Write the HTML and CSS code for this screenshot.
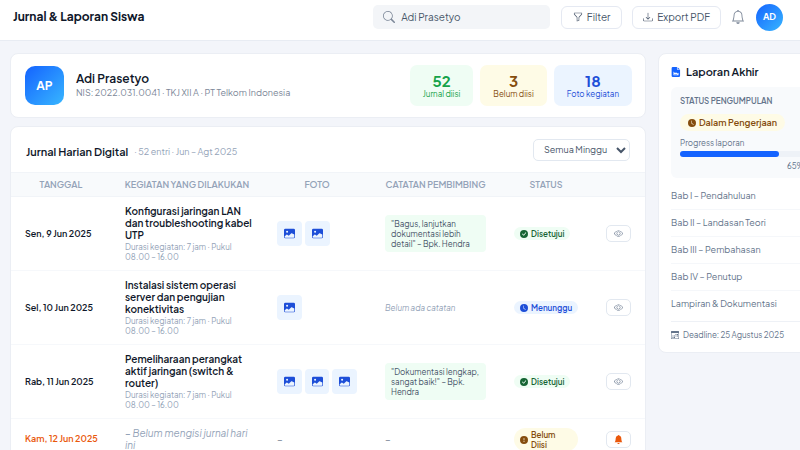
FILE: index.html
```html
<!DOCTYPE html>
<html lang="id">

<head>
  <meta charset="UTF-8" />
  <meta name="viewport" content="width=device-width, initial-scale=1.0" />
  <title>Jurnal & Laporan Siswa</title>
  <link rel="stylesheet" href="styles.css">
</head>

<body>
  <!-- Icon set -->
  <svg class="sprite" aria-hidden="true">
    <symbol id="search" viewBox="0 0 16 16"><path d="M11.742 10.344a6.5 6.5 0 1 0-1.397 1.398h-.001q.044.06.098.115l3.85 3.85a1 1 0 0 0 1.415-1.414l-3.85-3.85a1 1 0 0 0-.115-.1zM12 6.5a5.5 5.5 0 1 1-11 0 5.5 5.5 0 0 1 11 0"/></symbol>
    <symbol id="funnel" viewBox="0 0 16 16"><path d="M1.5 1.5A.5.5 0 0 1 2 1h12a.5.5 0 0 1 .5.5v2a.5.5 0 0 1-.128.334L10 8.692V13.5a.5.5 0 0 1-.342.474l-3 1A.5.5 0 0 1 6 14.5V8.692L1.628 3.834A.5.5 0 0 1 1.5 3.5zm1 .5v1.308l4.372 4.858A.5.5 0 0 1 7 8.5v5.306l2-.666V8.5a.5.5 0 0 1 .128-.334L13.5 3.308V2z"/></symbol>
    <symbol id="download" viewBox="0 0 16 16"><path d="M.5 9.9a.5.5 0 0 1 .5.5v2.5a1 1 0 0 0 1 1h12a1 1 0 0 0 1-1v-2.5a.5.5 0 0 1 1 0v2.5a2 2 0 0 1-2 2H2a2 2 0 0 1-2-2v-2.5a.5.5 0 0 1 .5-.5"/><path d="M7.646 11.854a.5.5 0 0 0 .708 0l3-3a.5.5 0 0 0-.708-.708L8.5 10.293V1.5a.5.5 0 0 0-1 0v8.793L5.354 8.146a.5.5 0 1 0-.708.708z"/></symbol>
    <symbol id="bell" viewBox="0 0 16 16"><path d="M8 16a2 2 0 0 0 2-2H6a2 2 0 0 0 2 2M8 1.918l-.797.161A4 4 0 0 0 4 6c0 .628-.134 2.197-.459 3.742-.16.767-.376 1.566-.663 2.258h10.244c-.287-.692-.502-1.49-.663-2.258C12.134 8.197 12 6.628 12 6a4 4 0 0 0-3.203-3.92zM14.22 12c.223.447.481.801.78 1H1c.299-.199.557-.553.78-1C2.68 10.2 3 6.88 3 6c0-2.42 1.72-4.44 4.005-4.901a1 1 0 1 1 1.99 0A5 5 0 0 1 13 6c0 .88.32 4.2 1.22 6"/></symbol>
    <symbol id="bell-fill" viewBox="0 0 16 16"><path d="M8 16a2 2 0 0 0 2-2H6a2 2 0 0 0 2 2m.995-14.901a1 1 0 1 0-1.99 0A5 5 0 0 0 3 6c0 1.098-.5 6-2 7h14c-1.5-1-2-5.902-2-7 0-2.42-1.72-4.44-4.005-4.901"/></symbol>
    <symbol id="check" viewBox="0 0 16 16"><path d="M16 8A8 8 0 1 1 0 8a8 8 0 0 1 16 0m-3.97-3.03a.75.75 0 0 0-1.08.022L7.477 9.417 5.384 7.323a.75.75 0 0 0-1.06 1.06L6.97 11.03a.75.75 0 0 0 1.079-.02l3.992-4.99a.75.75 0 0 0-.01-1.05z"/></symbol>
    <symbol id="clock" viewBox="0 0 16 16"><path d="M16 8A8 8 0 1 1 0 8a8 8 0 0 1 16 0M8 3.5a.5.5 0 0 0-1 0V9a.5.5 0 0 0 .252.434l3.5 2a.5.5 0 0 0 .496-.868L8 8.71z"/></symbol>
    <symbol id="exclamation" viewBox="0 0 16 16"><path d="M16 8A8 8 0 1 1 0 8a8 8 0 0 1 16 0M8 4a.905.905 0 0 0-.9.995l.35 3.507a.552.552 0 0 0 1.1 0l.35-3.507A.905.905 0 0 0 8 4m.002 6a1 1 0 1 0 0 2 1 1 0 0 0 0-2"/></symbol>
    <symbol id="eye" viewBox="0 0 16 16"><path d="M16 8s-3-5.500-8-5.500S0 8 0 8s3 5.500 8 5.500S16 8 16 8M1.173 8a13 13 0 0 1 1.660-2.043C4.120 4.668 5.880 3.500 8 3.500s3.879 1.168 5.168 2.457A13 13 0 0 1 14.828 8q-.086.13-.195.288c-.335.48-.83 1.120-1.465 1.755C11.879 11.332 10.119 12.500 8 12.500s-3.879-1.168-5.168-2.457A13 13 0 0 1 1.172 8z"/><path d="M8 5.500a2.500 2.500 0 1 0 0 5 2.500 2.500 0 0 0 0-5M4.500 8a3.500 3.500 0 1 1 7 0 3.500 3.500 0 0 1-7 0"/></symbol>
    <symbol id="image" viewBox="0 0 16 16"><path d="M.002 3a2 2 0 0 1 2-2h12a2 2 0 0 1 2 2v10a2 2 0 0 1-2 2h-12a2 2 0 0 1-2-2zm1 9v1a1 1 0 0 0 1 1h12a1 1 0 0 0 1-1V9.500l-3.777-1.947a.5.5 0 0 0-.577.093l-3.710 3.710-2.660-1.772a.5.5 0 0 0-.63.062zm5-6.500a1.500 1.500 0 1 0-3 0 1.500 1.500 0 0 0 3 0"/></symbol>
    <symbol id="file" viewBox="0 0 16 16"><path fill-rule="evenodd" d="M3 0h6.500v3A1.500 1.500 0 0 0 11 4.500h3.500V14a2 2 0 0 1-2 2H3a2 2 0 0 1-2-2V2a2 2 0 0 1 2-2m7.500.5 3.500 3H11a.5.5 0 0 1-.5-.5zM4 7v6h8V9l-2 1.500L8 8.500 6.500 10zm1 4h5v1H5z"/></symbol>
    <symbol id="calendar" viewBox="0 0 16 16"><path fill-rule="evenodd" d="M1 0h14a1 1 0 0 1 1 1v14a1 1 0 0 1-1 1H1a1 1 0 0 1-1-1V1a1 1 0 0 1 1-1m0 4v11h14V4zM9 6h2v2H9zm3 0h2v2h-2zM6 9h2v2H6zm3 0h2v2H9zm3 0h2v2h-2zM3 9h2v2H3zm0 3h2v2H3zm3 0h2v2H6z"/></symbol>
  </svg>

  <header class="topbar">
    <h1>Jurnal & Laporan Siswa</h1>
    <div class="search">
      <svg class="icon"><use href="#search"/></svg>
      <input type="text" value="Adi Prasetyo" aria-label="Cari siswa" />
    </div>
    <button class="btn"><svg class="icon"><use href="#funnel"/></svg>Filter</button>
    <button class="btn"><svg class="icon"><use href="#download"/></svg>Export PDF</button>
    <button class="bell" aria-label="Notifikasi"><svg class="icon"><use href="#bell"/></svg></button>
    <div class="avatar">AD</div>
  </header>

  <div class="layout">
    <main>
      <section class="card profile">
        <div class="initials">AP</div>
        <div class="info">
          <h2>Adi Prasetyo</h2>
          <p>NIS: 2022.031.0041 · TKJ XII A · PT Telkom Indonesia</p>
        </div>
        <div class="stats">
          <div class="stat green"><b>52</b><span>Jurnal diisi</span></div>
          <div class="stat yellow"><b>3</b><span>Belum diisi</span></div>
          <div class="stat blue"><b>18</b><span>Foto kegiatan</span></div>
        </div>
      </section>

      <section class="card journal">
        <div class="journal-head">
          <h3>Jurnal Harian Digital</h3>
          <span>· 52 entri · Jun – Agt 2025</span>
          <select aria-label="Pilih minggu">
            <option>Semua Minggu</option>
          </select>
        </div>

        <table>
          <colgroup>
            <col class="c-date"><col class="c-work"><col class="c-photo"><col class="c-note"><col class="c-status"><col class="c-action">
          </colgroup>
          <thead>
            <tr>
              <th>TANGGAL</th>
              <th>KEGIATAN YANG DILAKUKAN</th>
              <th>FOTO</th>
              <th>CATATAN PEMBIMBING</th>
              <th>STATUS</th>
              <th></th>
            </tr>
          </thead>
          <tbody>
            <tr>
              <td class="date">Sen, 9 Jun 2025</td>
              <td>
                <div class="work">Konfigurasi jaringan LAN<br>dan troubleshooting kabel<br>UTP</div>
                <div class="time">Durasi kegiatan: 7 jam · Pukul<br>08.00 – 16.00</div>
              </td>
              <td>
                <div class="photos">
                  <span class="photo"><svg class="icon"><use href="#image"/></svg></span>
                  <span class="photo"><svg class="icon"><use href="#image"/></svg></span>
                </div>
              </td>
              <td><div class="note">"Bagus, lanjutkan<br>dokumentasi lebih<br>detail" – Bpk. Hendra</div></td>
              <td><span class="badge green"><svg class="icon"><use href="#check"/></svg>Disetujui</span></td>
              <td><button class="action" aria-label="Lihat"><svg class="icon"><use href="#eye"/></svg></button></td>
            </tr>
            <tr>
              <td class="date">Sel, 10 Jun 2025</td>
              <td>
                <div class="work">Instalasi sistem operasi<br>server dan pengujian<br>konektivitas</div>
                <div class="time">Durasi kegiatan: 7 jam · Pukul<br>08.00 – 16.00</div>
              </td>
              <td>
                <div class="photos">
                  <span class="photo"><svg class="icon"><use href="#image"/></svg></span>
                </div>
              </td>
              <td class="none">Belum ada catatan</td>
              <td><span class="badge blue"><svg class="icon"><use href="#clock"/></svg>Menunggu</span></td>
              <td><button class="action" aria-label="Lihat"><svg class="icon"><use href="#eye"/></svg></button></td>
            </tr>
            <tr>
              <td class="date">Rab, 11 Jun 2025</td>
              <td>
                <div class="work">Pemeliharaan perangkat<br>aktif jaringan (switch &<br>router)</div>
                <div class="time">Durasi kegiatan: 7 jam · Pukul<br>08.00 – 16.00</div>
              </td>
              <td>
                <div class="photos">
                  <span class="photo"><svg class="icon"><use href="#image"/></svg></span>
                  <span class="photo"><svg class="icon"><use href="#image"/></svg></span>
                  <span class="photo"><svg class="icon"><use href="#image"/></svg></span>
                </div>
              </td>
              <td><div class="note">"Dokumentasi lengkap,<br>sangat baik!" – Bpk.<br>Hendra</div></td>
              <td><span class="badge green"><svg class="icon"><use href="#check"/></svg>Disetujui</span></td>
              <td><button class="action" aria-label="Lihat"><svg class="icon"><use href="#eye"/></svg></button></td>
            </tr>
            <tr>
              <td class="date late">Kam, 12 Jun 2025</td>
              <td><div class="empty">– Belum mengisi jurnal hari<br>ini</div></td>
              <td class="dash">–</td>
              <td class="dash">–</td>
              <td><span class="badge yellow wide"><svg class="icon"><use href="#exclamation"/></svg><span>Belum<br>Diisi</span></span></td>
              <td><button class="action remind" aria-label="Ingatkan"><svg class="icon"><use href="#bell-fill"/></svg></button></td>
            </tr>
          </tbody>
        </table>
      </section>
    </main>

    <aside class="card report">
      <h3><svg class="icon"><use href="#file"/></svg>Laporan Akhir</h3>
      <div class="progress-box">
        <h4>STATUS PENGUMPULAN</h4>
        <span class="pill"><svg class="icon"><use href="#clock"/></svg>Dalam Pengerjaan</span>
        <p>Progress laporan</p>
        <div class="track"><div class="fill" style="width: 65%"></div></div>
        <p class="percent">65% selesai</p>
      </div>
      <ul>
        <li>Bab I – Pendahuluan</li>
        <li>Bab II – Landasan Teori</li>
        <li>Bab III – Pembahasan</li>
        <li>Bab IV – Penutup</li>
        <li>Lampiran & Dokumentasi</li>
      </ul>
      <div class="deadline"><svg class="icon"><use href="#calendar"/></svg>Deadline: 25 Agustus 2025</div>
    </aside>
  </div>
</body>

</html>
```
FILE: styles.css
```css
* {
  box-sizing: border-box;
  margin: 0;
  padding: 0;
}

html {
  overflow-x: hidden;
}

body {
  background-color: #f3f5fa;
  color: #0f172a;
  font-family: "Plus Jakarta Sans", "Inter", sans-serif;
  font-size: 10px;
  line-height: 12px;
}

button,
input,
select {
  font-family: inherit;
}

.sprite {
  display: none;
}

.icon {
  width: 10px;
  height: 10px;
  fill: currentColor;
  flex-shrink: 0;
}

/* top bar */
.topbar {
  display: flex;
  align-items: center;
  height: 41px;
  padding: 0 17px 6px 13px;
  background-color: white;
  border-bottom: 1px solid #e8ecf3;
}

h1 {
  font-size: 12px;
  font-weight: 700;
  margin-right: auto;
}

.search {
  display: flex;
  align-items: center;
  gap: 6px;
  width: 177px;
  height: 24px;
  padding: 0 10px;
  margin-right: 11px;
  border-radius: 5px;
  background-color: #f3f5f8;
  color: #7c8798;
}

.search .icon {
  width: 12px;
  height: 12px;
}

.search input {
  width: 100%;
  border: none;
  outline: none;
  background: none;
  color: #475569;
  font-size: 10px;
}

.btn {
  display: flex;
  align-items: center;
  justify-content: center;
  gap: 4px;
  min-width: 61px;
  height: 23px;
  padding: 0 10px;
  margin-right: 10px;
  border: 1px solid #e5e9f2;
  border-radius: 6px;
  background-color: white;
  color: #475569;
  font-size: 10px;
}

.bell {
  display: flex;
  margin-right: 11px;
  border: none;
  background: none;
  color: #7c8798;
}

.bell .icon {
  width: 14px;
  height: 14px;
}

.avatar,
.initials {
  display: flex;
  align-items: center;
  justify-content: center;
  background: linear-gradient(135deg, #1463ff, #38b6ff);
  color: white;
  font-weight: 700;
}

.avatar {
  width: 27px;
  height: 27px;
  border-radius: 50%;
  font-size: 9px;
}

/* page columns */
.layout {
  display: grid;
  grid-template-columns: minmax(636px, 1fr) 195px;
  align-items: start;
  gap: 12px;
  padding: 12px 10px;
}

main {
  display: grid;
  gap: 8px;
}

.card {
  background-color: white;
  border: 1px solid #ebeef4;
  border-radius: 8px;
}

.profile {
  display: flex;
  align-items: center;
  gap: 12px;
  height: 65px;
  padding: 0 13px 0 14px;
}

.initials {
  width: 39px;
  height: 39px;
  border-radius: 10px;
  font-size: 12px;
}

.info h2 {
  font-size: 12px;
  font-weight: 600;
  line-height: 14px;
}

.info p {
  color: #7c8798;
  font-size: 9px;
  line-height: 14px;
}

.stats {
  display: flex;
  gap: 7px;
  margin-left: auto;
}

.stat {
  display: flex;
  flex-direction: column;
  align-items: center;
  padding: 7px 13px 6px;
  border-radius: 7px;
}

.stat b {
  font-size: 15px;
  line-height: 17px;
}

.stat span {
  font-size: 8px;
  line-height: 11px;
}

.green {
  background-color: #effdf4;
  color: #16a34a;
}

.yellow {
  background-color: #fefbe6;
  color: #854d0e;
}

.blue {
  background-color: #ebf4ff;
  color: #1d4ed8;
}

/* journal */
.journal {
  overflow: hidden;
}

.journal-head {
  display: flex;
  align-items: center;
  gap: 6px;
  height: 45px;
  padding: 0 15px;
}

h3 {
  font-size: 11px;
  font-weight: 600;
}

.journal-head h3,
.journal-head span {
  padding-top: 4px;
}

.journal-head span {
  color: #94a3b8;
  font-size: 9px;
}

select {
  width: 97px;
  height: 22px;
  margin-left: auto;
  padding-left: 6px;
  border: 1px solid #e2e8f0;
  border-radius: 5px;
  background-color: white;
  color: #475569;
  font-size: 9px;
}

table {
  width: 100%;
  table-layout: fixed;
  border-collapse: separate;
  border-spacing: 0;
}

.c-date {
  width: 100px;
}

.c-work {
  width: 152px;
}

.c-photo {
  width: 108px;
}

.c-note {
  width: 129px;
}

.c-status {
  width: 92px;
}

.c-action {
  width: 53px;
}

th {
  height: 25px;
  background-color: #f8fafc;
  border-top: 1px solid #f1f4f8;
  border-bottom: 1px solid #f1f4f8;
  color: #94a3b8;
  font-size: 9px;
  font-weight: 600;
  white-space: nowrap;
}

td {
  padding: 8px 14px;
  border-bottom: 1px solid #f6f8fb;
  vertical-align: middle;
}

.date {
  font-size: 9px;
  font-weight: 600;
  white-space: nowrap;
}

.late {
  color: #ea580c;
}

.work {
  font-size: 10px;
  font-weight: 600;
  white-space: nowrap;
}

.time {
  margin-top: 1px;
  color: #94a3b8;
  font-size: 8px;
  line-height: 10px;
  white-space: nowrap;
}

.photos {
  display: flex;
  gap: 3px;
}

.photo {
  display: flex;
  align-items: center;
  justify-content: center;
  width: 25px;
  height: 25px;
  border-radius: 4px;
  background-color: #ebf4ff;
  color: #1d4ed8;
}

.photo .icon {
  width: 11px;
  height: 11px;
}

.note {
  padding: 4px 6px 3px;
  border-radius: 4px;
  background-color: #effdf4;
  color: #475569;
  font-size: 8px;
  line-height: 10px;
  white-space: nowrap;
}

.none {
  color: #94a3b8;
  font-size: 8px;
  font-style: italic;
}

.empty {
  color: #94a3b8;
  font-style: italic;
  white-space: nowrap;
}

.dash {
  color: #7c8798;
}

.badge {
  display: inline-flex;
  align-items: center;
  gap: 3px;
  padding: 2px 6px 1px;
  border-radius: 12px;
  font-size: 8px;
  font-weight: 600;
  line-height: 10px;
}

.badge .icon {
  width: 8px;
  height: 8px;
}

.badge.green {
  color: #166534;
}

.badge.wide {
  display: flex;
}

.action {
  display: flex;
  align-items: center;
  justify-content: center;
  width: 25px;
  height: 17px;
  border: 1px solid #e2e8f0;
  border-radius: 5px;
  background-color: white;
  color: #64748b;
}

.action .icon {
  width: 9px;
  height: 9px;
}

.remind {
  color: #ea580c;
}

/* final report */
.report {
  padding: 12px 11px 11px 12px;
}

.report h3 {
  display: flex;
  align-items: center;
  gap: 5px;
}

.report h3 .icon {
  color: #1463ff;
}

.progress-box {
  margin-top: 9px;
  padding: 8px 9px 6px;
  border-radius: 6px;
  background-color: #f8fafc;
  color: #64748b;
}

h4 {
  font-size: 8px;
  font-weight: 600;
}

.pill {
  display: inline-flex;
  align-items: center;
  gap: 3px;
  margin: 7px 0 6px;
  padding: 3px 8px 2px;
  border-radius: 9px;
  background-color: #fefbe6;
  color: #854d0e;
  font-size: 9px;
  font-weight: 600;
}

.pill .icon {
  width: 8px;
  height: 8px;
}

.progress-box p {
  font-size: 8px;
}

.track {
  height: 6px;
  margin: 2px 0 3px;
  border-radius: 3px;
  background-color: #eef2f7;
}

.fill {
  height: 100%;
  border-radius: 3px;
  background-color: #1463ff;
}

.progress-box .percent {
  text-align: right;
}

ul {
  list-style: none;
  margin-top: 5px;
}

li {
  padding: 7px 0;
  border-bottom: 1px solid #f5f7fa;
  color: #64748b;
  font-size: 9px;
}

li:last-child {
  border-bottom: none;
}

.deadline {
  display: flex;
  align-items: center;
  gap: 4px;
  margin-top: 4px;
  padding-top: 7px;
  border-top: 1px solid #eef1f6;
  color: #64748b;
  font-size: 8px;
}

.deadline .icon {
  width: 8px;
  height: 8px;
}
```
